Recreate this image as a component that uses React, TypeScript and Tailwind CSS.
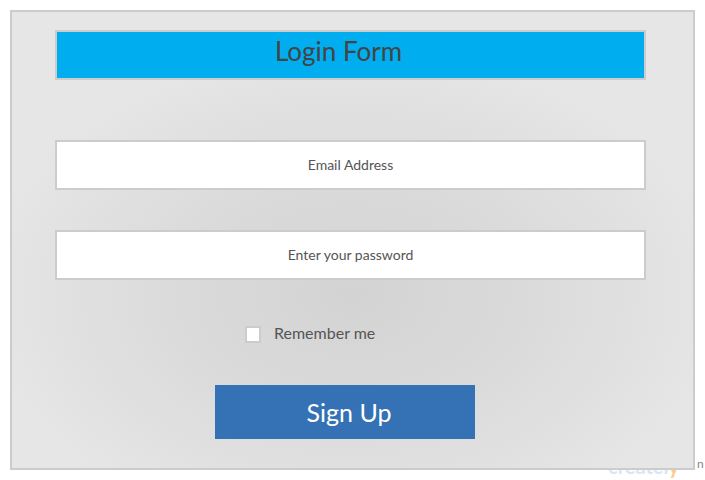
import React from "react";

export default function App() {
  return (
    <div className="relative w-[705px] h-[480px] bg-white overflow-hidden" style={{ fontFamily: "Lato, 'Open Sans', sans-serif" }}>
      {/* faint watermark behind the box */}
      <div className="absolute z-0 left-[608px] top-[456px] text-[20px] font-bold text-[#d6e8f5] leading-none">
        createl<span className="text-[#f9cc8e]">y</span>
      </div>
      <div className="absolute z-0 left-[697px] top-[458px] text-[12px] text-[#888] leading-none">n</div>

      <div className="relative z-10 ml-[10px] mt-[10px] w-[685px] h-[460px] border-2 border-[#cccccc] bg-[radial-gradient(ellipse_55%_55%_at_50%_62%,#d3d3d3_0%,#dbdbdb_50%,#e6e6e6_100%)] pl-[43px] pt-[18px] flex flex-col">
        <div className="w-[591px] h-[50px] border-2 border-[#cccccc] bg-[#00adef] flex items-center justify-center pr-[24px]">
          <span className="text-[26px] text-[#444444] leading-none -mt-[9px]">Login Form</span>
        </div>

        <div className="mt-[60px] w-[591px] h-[50px] border-2 border-[#cccccc] bg-white flex items-center justify-center">
          <span className="text-[14px] text-[#555555] -mt-[2px]">Email Address</span>
        </div>

        <div className="mt-[40px] w-[591px] h-[50px] border-2 border-[#cccccc] bg-white flex items-center justify-center">
          <span className="text-[14px] text-[#555555] -mt-[2px]">Enter your password</span>
        </div>

        <div className="mt-[45px] ml-[190px] flex items-center h-[18px]">
          <div className="w-[16px] h-[17px] border-2 border-[#cccccc] bg-white" />
          <span className="ml-[13px] text-[16px] text-[#555555] leading-none -mt-[2px]">Remember me</span>
        </div>

        <div className="mt-[42px] ml-[160px] w-[260px] h-[54px] bg-[#3572b5] flex items-center justify-center pl-[8px]">
          <span className="text-[25px] text-white leading-none">Sign Up</span>
        </div>
      </div>
    </div>
  );
}
